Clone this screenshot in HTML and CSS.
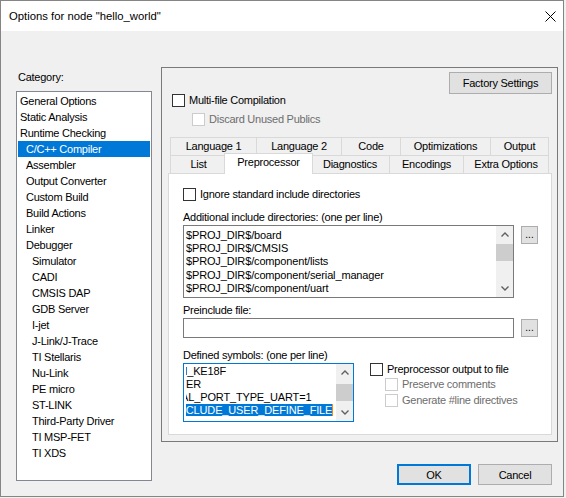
FILE: index.html
```html
<!DOCTYPE html>
<html>
<head>
<meta charset="utf-8">
<link rel="stylesheet" href="styles.css">
</head>
<body>
<div class="window">
  <div class="titlebar">
    <span class="title">Options for node "hello_world"</span>
    <svg class="close" width="11" height="11" viewBox="0 0 11 11"><path d="M0.5 0.5 L10.5 10.5 M10.5 0.5 L0.5 10.5" stroke="#000" stroke-width="1" fill="none"/></svg>
  </div>
  <div class="main">
    <div class="left">
      <div class="cat-label">Category:</div>
      <div class="listbox">
        <div class="item l0">General Options</div>
        <div class="item l0">Static Analysis</div>
        <div class="item l0">Runtime Checking</div>
        <div class="item l1 sel">C/C++ Compiler</div>
        <div class="item l1">Assembler</div>
        <div class="item l1">Output Converter</div>
        <div class="item l1">Custom Build</div>
        <div class="item l1">Build Actions</div>
        <div class="item l1">Linker</div>
        <div class="item l1">Debugger</div>
        <div class="item l2">Simulator</div>
        <div class="item l2">CADI</div>
        <div class="item l2">CMSIS DAP</div>
        <div class="item l2">GDB Server</div>
        <div class="item l2">I-jet</div>
        <div class="item l2">J-Link/J-Trace</div>
        <div class="item l2">TI Stellaris</div>
        <div class="item l2">Nu-Link</div>
        <div class="item l2">PE micro</div>
        <div class="item l2">ST-LINK</div>
        <div class="item l2">Third-Party Driver</div>
        <div class="item l2">TI MSP-FET</div>
        <div class="item l2">TI XDS</div>
      </div>
    </div>
    <div class="right">
      <div class="group">
        <div class="factory-row"><button class="btn factory">Factory Settings</button></div>
        <div class="check multi"><span class="box"></span><span class="ctext">Multi-file Compilation</span></div>
        <div class="check discard disabled"><span class="box"></span><span class="ctext">Discard Unused Publics</span></div>
        <div class="tabs">
          <div class="tabrow">
            <div class="tab w-lang1">Language 1</div>
            <div class="tab w-lang2">Language 2</div>
            <div class="tab w-code">Code</div>
            <div class="tab w-opt">Optimizations</div>
            <div class="tab w-out">Output</div>
          </div>
          <div class="tabrow">
            <div class="tab w-list">List</div>
            <div class="tab w-pre active">Preprocessor</div>
            <div class="tab w-diag">Diagnostics</div>
            <div class="tab w-enc">Encodings</div>
            <div class="tab w-extra">Extra Options</div>
          </div>
          <div class="panel">
            <div class="check"><span class="box"></span><span class="ctext">Ignore standard include directories</span></div>
            <div class="field-label first">Additional include directories: (one per line)</div>
            <div class="field-row">
              <div class="textarea inc">
                <div class="ta-text">
                  <div class="line">$PROJ_DIR$/board</div>
                  <div class="line">$PROJ_DIR$/CMSIS</div>
                  <div class="line">$PROJ_DIR$/component/lists</div>
                  <div class="line">$PROJ_DIR$/component/serial_manager</div>
                  <div class="line">$PROJ_DIR$/component/uart</div>
                </div>
                <div class="scrollbar">
                  <div class="sb-btn"><svg width="8" height="5" viewBox="0 0 8 5"><polyline points="0.5,4.5 4,1 7.5,4.5" fill="none" stroke="#606060" stroke-width="1.4"/></svg></div>
                  <div class="sb-track"><div class="thumb"></div></div>
                  <div class="sb-btn"><svg width="8" height="5" viewBox="0 0 8 5"><polyline points="0.5,0.5 4,4 7.5,0.5" fill="none" stroke="#606060" stroke-width="1.4"/></svg></div>
                </div>
              </div>
              <button class="btn dots">...</button>
            </div>
            <div class="field-label mid">Preinclude file:</div>
            <div class="field-row">
              <div class="input"></div>
              <button class="btn dots">...</button>
            </div>
            <div class="field-label last">Defined symbols: (one per line)</div>
            <div class="field-row">
              <div class="textarea sym">
                <div class="sym-text">
                  <div class="sym-clip">
                    <div class="sym-lines">
                      <div class="line">FRDM_KE18F</div>
                      <div class="line">MASTER</div>
                      <div class="line">SERIAL_PORT_TYPE_UART=1</div>
                      <div class="line"><span class="selected">FT_INCLUDE_USER_DEFINE_FILE</span></div>
                    </div>
                  </div>
                </div>
                <div class="scrollbar">
                  <div class="sb-btn"><svg width="8" height="5" viewBox="0 0 8 5"><polyline points="0.5,4.5 4,1 7.5,4.5" fill="none" stroke="#606060" stroke-width="1.4"/></svg></div>
                  <div class="sb-track low"><div class="thumb"></div></div>
                  <div class="sb-btn"><svg width="8" height="5" viewBox="0 0 8 5"><polyline points="0.5,0.5 4,4 7.5,0.5" fill="none" stroke="#606060" stroke-width="1.4"/></svg></div>
                </div>
              </div>
              <div class="pp-opts">
                <div class="check"><span class="box"></span><span class="ctext">Preprocessor output to file</span></div>
                <div class="check disabled sub1"><span class="box"></span><span class="ctext">Preserve comments</span></div>
                <div class="check disabled sub2"><span class="box"></span><span class="ctext">Generate #line directives</span></div>
              </div>
            </div>
          </div>
        </div>
      </div>
      <div class="buttons">
        <button class="btn dlg ok">OK</button>
        <button class="btn dlg">Cancel</button>
      </div>
    </div>
  </div>
</div>
</body>
</html>
```
FILE: styles.css
```css
* { box-sizing: border-box; }
html, body { margin: 0; padding: 0; }
body {
  width: 566px;
  height: 498px;
  overflow: hidden;
  background: #f0f0f0;
  font-family: "Liberation Sans", Arial, sans-serif;
  font-size: 11px;
  letter-spacing: -0.25px;
  color: #000;
}
.window {
  width: 564px;
  height: 497px;
  border: 1px solid #858585;
  background: #f0f0f0;
  display: flex;
  flex-direction: column;
}
.titlebar {
  flex: none;
  height: 30px;
  background: #fff;
  display: flex;
  align-items: center;
  justify-content: space-between;
  padding: 0 7px 0 8px;
}
.title { font-size: 11.3px; letter-spacing: 0; }
.close { display: block; }

.main { flex: 1; display: flex; padding: 0 5px 0 15px; }
.left { width: 136px; display: flex; flex-direction: column; }
.cat-label { margin-top: 39px; height: 15px; line-height: 15px; padding-left: 2px; }
.listbox {
  margin-top: 6px;
  height: 390px;
  border: 1px solid #828790;
  background: #fff;
  padding-top: 1px;
}
.item { height: 16px; line-height: 16px; margin: 0 1px; white-space: nowrap; }
.l0 { padding-left: 2px; }
.l1 { padding-left: 8px; }
.l2 { padding-left: 14px; }
.item.sel { background: #0078d7; color: #fff; }

.right { margin-left: 9px; width: 397px; display: flex; flex-direction: column; }
.group {
  margin-top: 36px;
  height: 375px;
  border: 1px solid #7a7a7a;
  padding: 4px 5px 6px 6px;
  display: flex;
  flex-direction: column;
}
.btn {
  font: inherit;
  letter-spacing: inherit;
  color: #000;
  background: #e1e1e1;
  border: 1px solid #adadad;
  padding: 0;
  margin: 0;
  text-align: center;
}
.factory-row { display: flex; justify-content: flex-end; }
.factory { width: 103px; height: 22px; }

.check { display: flex; align-items: center; height: 13px; line-height: 13px; white-space: nowrap; }
.box { width: 13px; height: 13px; border: 1px solid #333; background: #fff; flex: none; }
.ctext { margin-left: 4px; }
.disabled .box { border-color: #cccccc; }
.disabled .ctext { color: #6d6d6d; }
.multi { margin-left: 4px; }
.discard { margin-left: 24px; margin-top: 6px; }

.tabs { margin-top: 11px; flex: 1; display: flex; flex-direction: column; }
.tabrow { display: flex; height: 18px; margin-left: 2px; align-items: flex-start; flex: none; }
.tab {
  height: 18px;
  line-height: 17px;
  border: 1px solid #d9d9d9;
  border-bottom: none;
  background: #f0f0f0;
  text-align: center;
  white-space: nowrap;
  margin-left: -1px;
}
.tab:first-child { margin-left: 0; }
.w-lang1 { width: 87px; }
.w-lang2 { width: 86px; }
.w-code { width: 60px; }
.w-opt { width: 91px; }
.w-out { width: 59px; }
.w-list { width: 57px; }
.w-pre { width: 85px; }
.w-diag { width: 80px; }
.w-enc { width: 75px; }
.w-extra { width: 86px; }
.tab.active {
  position: relative;
  z-index: 1;
  width: 89px;
  height: 21px;
  margin: -2px -2px 0 -3px;
  background: #fff;
}
.panel {
  flex: 1;
  border: 1px solid #d9d9d9;
  background: #fff;
  padding: 14px 0 0 14px;
}
.field-label { height: 13px; line-height: 13px; margin-bottom: 1px; white-space: nowrap; }
.field-label.first { margin-top: 10px; }
.field-label.mid { margin-top: 6px; }
.field-label.last { margin-top: 11px; }
.field-row { display: flex; align-items: flex-start; }
.textarea { border: 1px solid #7a7a7a; background: #fff; display: flex; overflow: hidden; }
.textarea.inc { width: 331px; height: 73px; }
.line { height: 13px; line-height: 13px; white-space: nowrap; }
.ta-text { flex: 1; padding: 3px 0 0 2px; overflow: hidden; letter-spacing: -0.15px; }
.ta-text .line { height: 13.2px; line-height: 13.2px; }
.scrollbar { width: 17px; flex: none; background: #f0f0f0; display: flex; flex-direction: column; }
.sb-btn { height: 17px; flex: none; display: flex; align-items: center; justify-content: center; }
.sb-btn svg { display: block; }
.sb-track { flex: 1; padding-top: 1px; }
.sb-track.low { padding-top: 3px; }
.thumb { height: 17px; background: #cdcdcd; }
.dots { width: 17px; height: 18px; margin: 1px 0 0 7px; line-height: 16px; font-size: 10px; letter-spacing: 0; }
.input { width: 331px; height: 20px; border: 1px solid #7a7a7a; background: #fff; }
.textarea.sym { width: 171px; height: 59px; border-color: #0078d7; }
.sym-text { flex: 1; padding: 1px 0 0 2px; overflow: hidden; }
.sym-clip { overflow: hidden; }
.sym-lines { margin-left: -30px; letter-spacing: -0.15px; }
.selected { background: #0078d7; color: #fff; display: inline-block; height: 12px; line-height: 13px; vertical-align: top; }
.selected::after { content: ""; display: inline-block; width: 1px; height: 12px; background: #f7871f; vertical-align: top; }
.pp-opts { margin-left: 16px; display: flex; flex-direction: column; }
.sub1 { margin-left: 15px; margin-top: 2px; }
.sub2 { margin-left: 15px; margin-top: 3px; }

.buttons { display: flex; justify-content: flex-end; gap: 7px; margin-top: 22px; padding-right: 6px; }
.dlg { width: 74px; height: 21px; }
.ok { border: 2px solid #0078d7; }
```
